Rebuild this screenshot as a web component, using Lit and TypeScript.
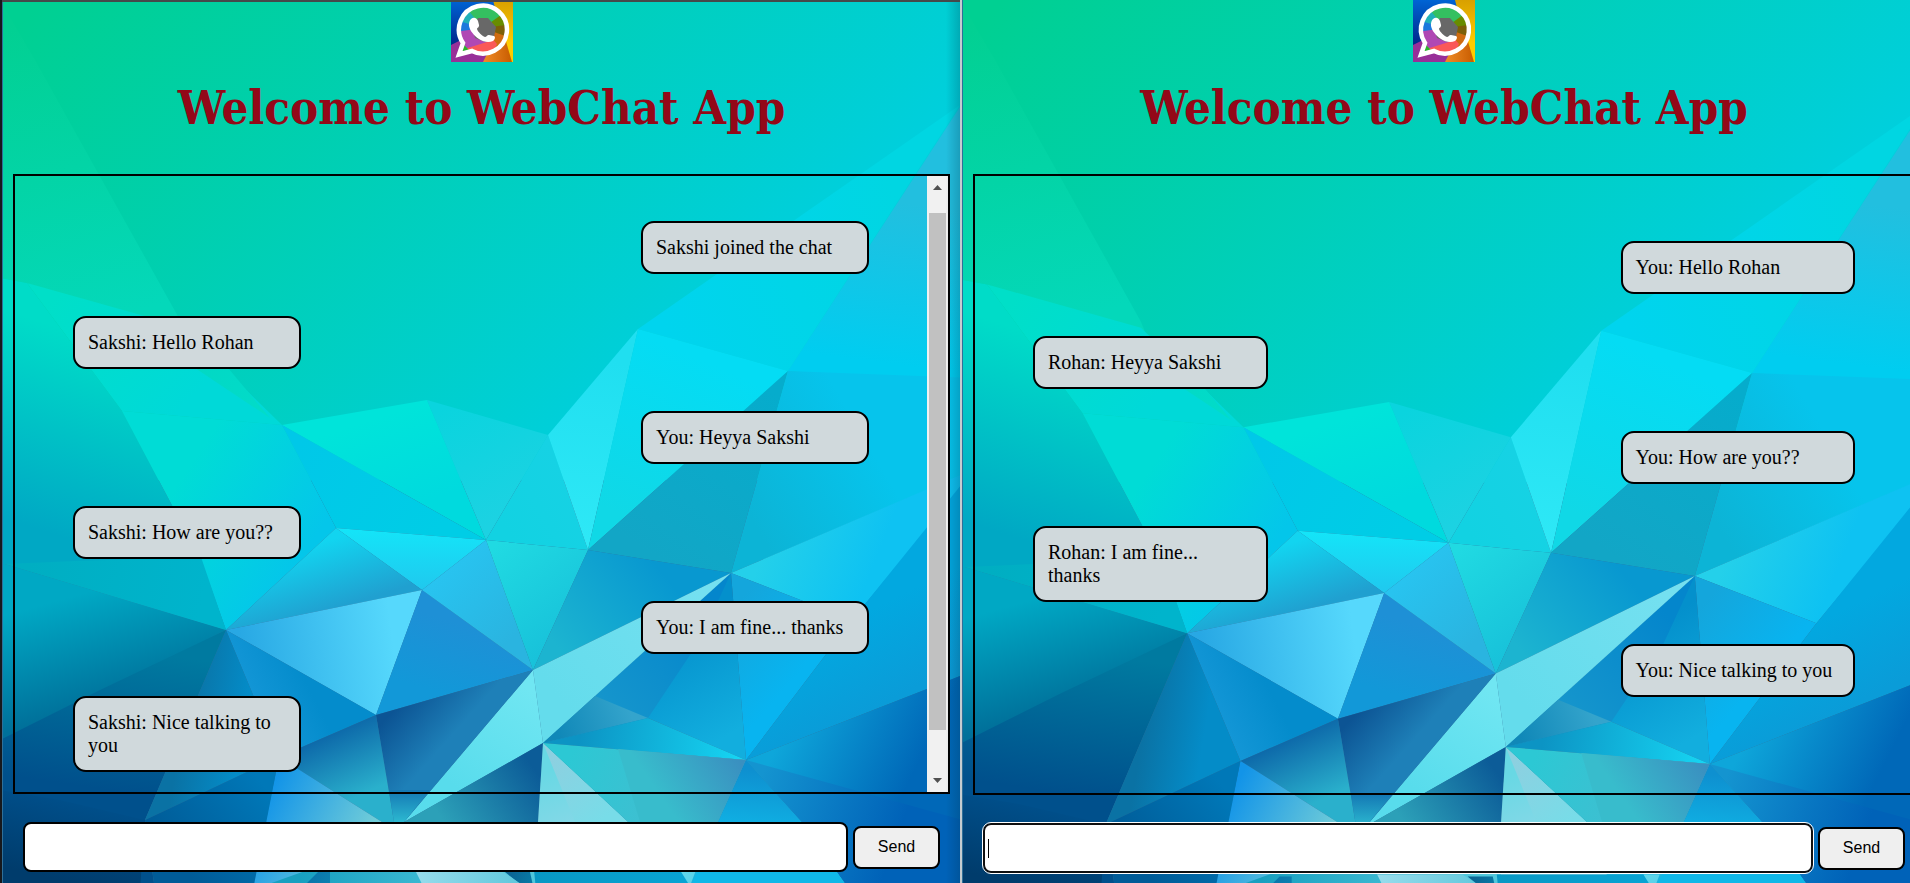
import { LitElement, html, svg, css } from "lit";
import { customElement, property } from "lit/decorators.js";
import { classMap } from "lit/directives/class-map.js";

interface Message {
  text: string;
  side: "left" | "right";
}

/* points, start colour, end colour, gradient line x1 y1 x2 y2 */
type Facet = [string, string, string, number, number, number, number];

const FACETS: Facet[] = [
  ["0,0 970,0 970,480 0,480", "#00d092", "#00cfdc", 130, -80, 600, 430],
  ["960,107 970,98 970,385 788,371", "#22bfdf", "#00cdf0", 880, 200, 860, 360],
  ["638,329 960,105 788,371", "#00d4ee", "#00d6e2", 660, 320, 900, 200],
  ["0,0 35,60 180,320 190,345 27,283 0,278", "#02d092", "#04d8ba", 20, 20, 110, 320],
  ["27,283 180,326 282,425 122,411", "#00dfc8", "#00d9d8", 60, 290, 180, 410],
  ["195,368 228,368 270,418", "#02d8c4", "#02dcca", 195, 368, 270, 418],
  ["0,278 27,283 122,411 201,560 226,630 5,564 0,564", "#00dcc8", "#00a8c4", 100, 340, 40, 530],
  ["122,411 282,425 336,528 226,630 201,560", "#00dcd6", "#04c6ea", 180, 480, 300, 560],
  ["282,425 427,400 486,540", "#00e4da", "#00dade", 400, 410, 430, 500],
  ["282,425 486,540 336,528", "#00c8e8", "#00cde6", 300, 440, 440, 530],
  ["427,400 548,435 486,540", "#0ad4de", "#1cd2e2", 440, 410, 500, 520],
  ["336,528 486,540 422,590", "#14e4f8", "#20c8ee", 420, 530, 420, 590],
  ["226,630 336,528 422,590", "#12d4f0", "#20a0d0", 330, 540, 350, 604],
  ["226,630 422,590 376,715", "#28a8e4", "#56d8fc", 240, 640, 390, 620],
  ["226,630 376,715 279,757", "#1698d8", "#048ccc", 250, 720, 310, 690],
  ["422,590 533,670 376,715", "#1e90d6", "#1298d8", 450, 620, 430, 690],
  ["422,590 486,540 533,670", "#28c4f0", "#2ab4e0", 440, 570, 510, 640],
  ["486,540 588,550 533,670", "#20dae2", "#18c2da", 490, 550, 560, 640],
  ["486,540 548,435 588,550", "#12d2e2", "#16d2e4", 500, 520, 570, 480],
  ["638,329 588,550 548,435", "#20dff0", "#2ee8f6", 600, 360, 580, 540],
  ["638,329 788,371 588,550", "#04dcf4", "#10d8e6", 680, 350, 610, 510],
  ["788,371 731,573 588,550", "#06accc", "#12a6c6", 770, 390, 660, 560],
  ["788,371 970,378 970,472 731,573", "#06c4ec", "#0cb4d6", 860, 430, 740, 500],
  ["731,573 970,471 970,478 852,620", "#24d0ea", "#0ec2f2", 760, 560, 860, 600],
  ["731,573 852,620 746,760", "#14a6dc", "#08b4f0", 740, 600, 810, 660],
  ["852,620 970,474 970,672 746,760", "#02a8e0", "#0a9cd8", 850, 620, 890, 700],
  ["588,550 731,573 533,670", "#0898d0", "#1cb4d0", 660, 570, 560, 650],
  ["731,573 746,760 648,718 543,743", "#0490cc", "#12aede", 660, 640, 720, 740],
  ["731,573 700,640 648,718 543,743", "#0486cc", "#1696cc", 710, 620, 600, 710],
  ["731,573 543,743 533,670", "#74e0f0", "#64dcec", 700, 590, 560, 700],
  ["533,670 543,743 404,822", "#70e6f2", "#58dcec", 530, 690, 460, 790],
  ["543,743 595,696 648,718", "#1088b8", "#34a4cc", 560, 740, 630, 712],
  ["543,743 648,718 746,760", "#0c94c4", "#16d4f2", 580, 735, 740, 756],
  ["376,715 533,670 404,822 394,822", "#0c5494", "#1e80b8", 385, 720, 430, 760],
  ["279,757 376,715 394,822 382,822", "#0c66a8", "#2ab0cc", 320, 735, 350, 800],
  ["394,822 389,790 430,790 404,822", "#1478b4", "#2cb8d0", 410, 790, 410, 822],
  ["279,757 382,822 500,890 253,883", "#1294e8", "#70ccd8", 275, 780, 370, 830],
  ["0,735 100,685 226,630 145,820 155,890 0,890", "#007aa0", "#00508c", 130, 650, 110, 790],
  ["0,790 60,800 145,820 140,890 0,890", "#00508c", "#003c6c", 90, 800, 70, 883],
  ["0,564 5,564 226,630 100,690 0,740", "#00a8c4", "#00709a", 60, 600, 90, 710],
  ["5,564 75,561 201,557 226,630", "#00aec2", "#00b4cc", 30, 564, 200, 610],
  ["226,630 279,757 145,820", "#0a72a4", "#048cc8", 180, 740, 240, 750],
  ["279,757 145,820 155,890 253,890", "#0078b8", "#005c98", 260, 780, 170, 850],
  ["543,743 404,822 390,890 536,890 538,822", "#0c5c98", "#2ca0b8", 535, 770, 450, 830],
  ["543,743 538,822 538,890 650,890 628,822", "#68d8e4", "#90d8e8", 550, 770, 580, 850],
  ["543,743 575,822 628,822", "#8cd0e0", "#78dce8", 550, 760, 600, 822],
  ["543,743 746,760 718,822 628,822", "#2cc8d4", "#44bcd0", 570, 755, 690, 810],
  ["618,749 746,760 718,822 640,822", "#38bccc", "#3a90c0", 670, 810, 740, 762],
  ["628,822 718,822 700,890 650,890", "#48c8d8", "#18b4e0", 660, 822, 680, 883],
  ["746,760 802,822 850,890 690,890 718,822", "#0e90d0", "#10b8e8", 746, 770, 740, 840],
  ["746,760 970,672 970,890 850,890 802,822", "#0ea6da", "#0068b8", 780, 740, 900, 800],
  ["746,760 970,822 970,890 850,890 802,822", "#1494d0", "#0062b8", 760, 780, 900, 830],
  ["404,822 330,862 252,890 540,890 538,868 480,860", "#18a0c0", "#50c8dc", 300, 880, 500, 880],
  ["300,890 318,872 330,872 330,890", "#0870a8", "#0c80b0", 300, 872, 330, 883],
  ["505,872 530,872 534,890 520,884", "#0c5c8c", "#0878a4", 500, 872, 530, 883],
  ["534,870 680,870 692,890 536,890", "#0898c4", "#08a4d4", 534, 870, 690, 883],
  ["680,870 696,870 690,886", "#60d8ec", "#58d0e8", 680, 870, 696, 883],
  ["415,870 500,870 530,890 425,890", "#98dcec", "#60c8dc", 415, 870, 520, 883],
];

@customElement("poly-backdrop")
export class PolyBackdrop extends LitElement {
  static styles = css`
    :host {
      display: block;
    }
    .art {
      display: block;
      width: 100%;
      height: 100%;
    }
  `;

  render() {
    return html`
      <svg class="art" viewBox="3 0 957 883" preserveAspectRatio="xMidYMin slice" aria-hidden="true">
        <defs>
          ${FACETS.map(
            ([, from, to, x1, y1, x2, y2], i) => svg`
              <linearGradient id="f${i}" gradientUnits="userSpaceOnUse" x1=${x1} y1=${y1} x2=${x2} y2=${y2}>
                <stop offset="0" stop-color=${from} />
                <stop offset="1" stop-color=${to} />
              </linearGradient>`
          )}
        </defs>
        ${FACETS.map(([points], i) => svg`<polygon points=${points} fill="url(#f${i})" />`)}
      </svg>
    `;
  }
}

@customElement("chat-logo")
export class ChatLogo extends LitElement {
  static styles = css`
    :host {
      display: block;
    }
    .logo {
      display: block;
      width: 62px;
      height: 62px;
    }
  `;

  render() {
    return html`
      <svg class="logo" viewBox="0 0 62 62" role="img" aria-label="WebChat logo">
        <defs>
          <linearGradient id="blue" x1="0" y1="0" x2="0" y2="1">
            <stop offset="0" stop-color="#0064d4" />
            <stop offset="0.7" stop-color="#00288c" />
          </linearGradient>
          <linearGradient id="gold" x1="0" y1="0" x2="0" y2="1">
            <stop offset="0" stop-color="#d8a000" />
            <stop offset="0.7" stop-color="#ffcc00" />
          </linearGradient>
          <linearGradient id="amber" x1="0" y1="0" x2="1" y2="0">
            <stop offset="0" stop-color="#f08c28" />
            <stop offset="1" stop-color="#c85c00" />
          </linearGradient>
          <clipPath id="disc"><circle cx="32" cy="30" r="25" /></clipPath>
        </defs>
        <rect width="62" height="62" fill="url(#blue)" />
        <path d="M0 45 30 30 36 62H0z" fill="#982f98" />
        <path d="M42 0h20v62h-3L48 24z" fill="url(#gold)" />
        <path d="M32 62 46 34 54 38 61 62z" fill="url(#amber)" />
        <g clip-path="url(#disc)">
          <path d="M32 28 4 48V14z" fill="#1c78dc" />
          <path d="M32 28 4 20 12 2h12z" fill="#20b0b8" />
          <path d="M32 28 17 10 26 0 60 14z" fill="#34c060" />
          <path d="M32 28 54 12 64 18v12z" fill="#688c00" />
          <path d="M32 28 62 24v18z" fill="#7c6008" />
          <path d="M32 28 60 38 52 60 38 58z" fill="#d06c10" />
          <path d="M32 28 46 44 38 60H8V50z" fill="#fa5858" />
          <path d="M32 28 36 42 4 52V32z" fill="#b048b4" />
        </g>
        <path d="M27 18h10l8 9-2 10-9 5-10-4-3-10z" fill="#686868" />
        <path d="M9 52 13 45 18 50z" fill="#28b428" />
        <path
          d="M12 43A24 24 0 1 1 21 51L8 54.500z"
          fill="none"
          stroke="#fff"
          stroke-width="4.500"
          stroke-linejoin="miter"
        />
        <path
          d="M20 19c3-2.500 6-1 7 2l1 4c.5 2-2 3-2 4 1 3 5 7 8 8 1.500 0 2.500-2.500 4-2l5 1c2 1 .5 4-1 5-4 2-10 1-14-2-5-3.500-9-8-10-13-.3-3 .5-5.500 2-7z"
          fill="#fff"
        />
      </svg>
    `;
  }
}

@customElement("chat-window")
export class ChatWindow extends LitElement {
  @property({ attribute: false }) messages: Message[] = [];
  @property({ type: Boolean }) scrolled = false;
  @property({ type: Boolean }) active = false;

  static styles = css`
    :host {
      display: block;
      position: relative;
      min-width: 0;
      font-family: "Liberation Serif", "Times New Roman", serif;
      font-size: 20px;
      line-height: 23px;
      color: #000;
    }
    .backdrop {
      position: absolute;
      inset: 0;
      overflow: hidden;
    }
    .page {
      position: relative;
      box-sizing: border-box;
      min-height: 100vh;
      display: flex;
      flex-direction: column;
    }
    .header {
      display: flex;
      flex-direction: column;
      align-items: center;
      padding-bottom: 34px;
    }
    .title {
      margin: 14px 0 0;
      font-family: "DejaVu Serif Condensed", "DejaVu Serif", serif;
      font-weight: bold;
      font-size: 47px;
      line-height: 64px;
      color: #930818;
      white-space: nowrap;
    }
    .chat {
      flex: 1;
      display: flex;
      margin: 0 10px;
      border: 2px solid #000;
    }
    .list {
      flex: 1;
      display: flex;
      flex-direction: column;
      gap: 42px;
      margin: 0;
      padding: 65px 58px 0;
      list-style: none;
    }
    .scrolled .list {
      padding-top: 45px;
    }
    .bubble {
      box-sizing: border-box;
      width: calc(25% + 29px);
      align-self: flex-start;
      padding: 13px;
      border: 2px solid #000;
      border-radius: 13px;
      background: #d0d9dc;
    }
    .bubble.right {
      align-self: flex-end;
    }
    .bar {
      width: 21px;
      display: flex;
      flex-direction: column;
      background: #f1f1f1;
    }
    .arrow {
      display: block;
      width: 21px;
      height: 21px;
      fill: #505050;
    }
    .thumb {
      flex: 1;
      margin: 16px 2px 41px;
      background: #c1c1c1;
    }
    .form {
      display: flex;
      align-items: center;
      gap: 5px;
      padding: 28px 20px 10px;
    }
    .scrolled .form {
      padding-bottom: 11px;
    }
    .field {
      position: relative;
      flex: 1;
      display: flex;
    }
    .input {
      box-sizing: border-box;
      flex: 1;
      min-width: 0;
      height: 50px;
      padding: 0 3px;
      border: 2px solid #000;
      border-radius: 8px;
      background: #fff;
      font-family: "Liberation Sans", Arial, sans-serif;
      font-size: 16px;
    }
    .active .input {
      border-color: #101010;
      outline: 1px solid #fff;
    }
    .caret {
      position: absolute;
      left: 5px;
      top: 16px;
      width: 1px;
      height: 19px;
      background: #000;
    }
    .send {
      box-sizing: border-box;
      width: 87px;
      height: 43px;
      padding: 0;
      border: 2px solid #000;
      border-radius: 8px;
      background: #efefef;
      font-family: "Liberation Sans", Arial, sans-serif;
      font-size: 16px;
      color: #000;
    }
  `;

  render() {
    return html`
      <poly-backdrop class="backdrop"></poly-backdrop>
      <div class=${classMap({ page: true, scrolled: this.scrolled, active: this.active })}>
        <header class="header">
          <chat-logo></chat-logo>
          <h1 class="title">Welcome to WebChat App</h1>
        </header>
        <main class="chat">
          <ul class="list">
            ${this.messages.map(
              (m) => html`<li class=${classMap({ bubble: true, right: m.side === "right" })}>${m.text}</li>`
            )}
          </ul>
          ${this.scrolled
            ? html`<div class="bar" aria-hidden="true">
                <svg class="arrow" viewBox="0 0 21 21"><path d="M6 14 10.500 9 15 14z" /></svg>
                <div class="thumb"></div>
                <svg class="arrow" viewBox="0 0 21 21"><path d="M6 7 10.500 12 15 7z" /></svg>
              </div>`
            : null}
        </main>
        <form class="form" @submit=${(e: Event) => e.preventDefault()}>
          <div class="field">
            <input class="input" type="text" aria-label="Message" autocomplete="off" />
            ${this.active ? html`<span class="caret"></span>` : null}
          </div>
          <button class="send" type="submit">Send</button>
        </form>
      </div>
    `;
  }
}

@customElement("app-root")
export class AppRoot extends LitElement {
  private rohan: Message[] = [
    { text: "Sakshi joined the chat", side: "right" },
    { text: "Sakshi: Hello Rohan", side: "left" },
    { text: "You: Heyya Sakshi", side: "right" },
    { text: "Sakshi: How are you??", side: "left" },
    { text: "You: I am fine... thanks", side: "right" },
    { text: "Sakshi: Nice talking to you", side: "left" },
  ];

  private sakshi: Message[] = [
    { text: "You: Hello Rohan", side: "right" },
    { text: "Rohan: Heyya Sakshi", side: "left" },
    { text: "You: How are you??", side: "right" },
    { text: "Rohan: I am fine... thanks", side: "left" },
    { text: "You: Nice talking to you", side: "right" },
  ];

  static styles = css`
    :host {
      display: block;
      overflow: hidden;
    }
    .desktop {
      display: grid;
      grid-template-columns: calc(50% + 5px) calc(50% + 10px);
      min-height: 100vh;
    }
    .frame {
      position: relative;
      display: grid;
      border-left: 2px solid #16181c;
      background: #2f6f98;
      padding-left: 1px;
    }
    .frame.first::before {
      content: "";
      position: absolute;
      z-index: 1;
      inset: 0 0 auto 0;
      height: 2px;
      background: #45494a;
    }
    .frame.first::after {
      content: "";
      position: absolute;
      inset: 0 0 0 auto;
      width: 14px;
      background: linear-gradient(to right, rgba(0, 40, 60, 0), rgba(0, 40, 60, 0.22));
    }
    .frame.second {
      border-left-color: #c4ccd0;
    }
  `;

  render() {
    return html`
      <div class="desktop">
        <div class="frame first">
          <chat-window .messages=${this.rohan} scrolled></chat-window>
        </div>
        <div class="frame second">
          <chat-window .messages=${this.sakshi} active></chat-window>
        </div>
      </div>
    `;
  }
}
